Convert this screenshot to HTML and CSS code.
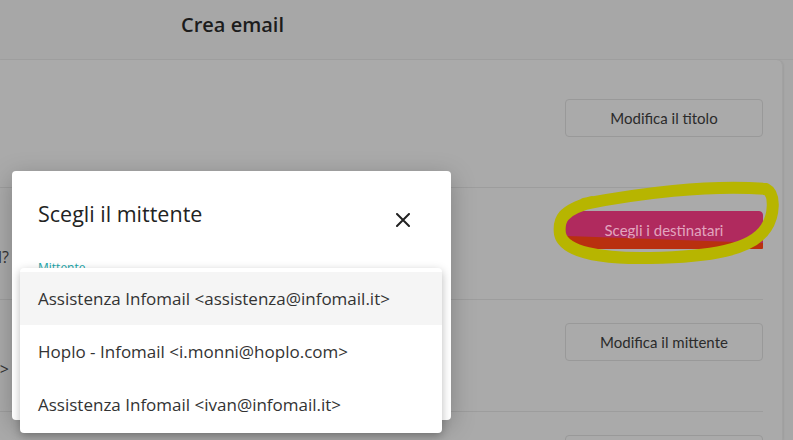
FILE: index.html
```html
<!DOCTYPE html>
<html lang="it">
<head>
    <meta charset="UTF-8">
    <meta name="viewport" content="width=device-width, initial-scale=1.0">
    <title>Crea email</title>
    <link rel="stylesheet" href="styles.css">
</head>
<body>
    <!-- Intestazione -->
    <header class="topbar">
        <h1 class="page-title">Crea email</h1>
    </header>

    <!-- Riepilogo campagna -->
    <main class="card">
        <section class="row">
            <div class="row-info"></div>
            <button class="btn">Modifica il titolo</button>
        </section>
        <section class="row">
            <div class="row-info">
                <p class="row-text">A chi vuoi inviare la tua email?</p>
            </div>
            <button class="btn btn-primary">Scegli i destinatari</button>
        </section>
        <section class="row">
            <div class="row-info">
                <p class="row-text">Assistenza Infomail &lt;assistenza@infomail.it&gt;</p>
            </div>
            <button class="btn">Modifica il mittente</button>
        </section>
        <section class="row">
            <div class="row-info"></div>
            <button class="btn">Modifica l'oggetto</button>
        </section>
    </main>

    <!-- Evidenziatore -->
    <svg class="marker" width="250" height="110" viewBox="0 0 250 110">
        <path d="M27 66 L223 73 L223 78 Q223 79 222 79 L28 79 Q27 79 27 78 Z" fill="#b9300f"/>
        <path d="M44 34 C 95 24, 170 14, 226 19 C 236 24, 234 46, 226 58 C 212 80, 170 87, 110 88 C 60 89, 24 82, 20 64 C 18 50, 22 40, 52 32"
              fill="none" stroke="#b7b500" stroke-width="12" stroke-linecap="round" stroke-linejoin="round"/>
    </svg>

    <!-- Finestra modale -->
    <div class="modal">
        <div class="modal-head">
            <h3>Scegli il mittente</h3>
            <button class="modal-close" aria-label="Chiudi">
                <svg width="14" height="14" viewBox="0 0 14 14">
                    <path d="M1 1 L13 13 M13 1 L1 13" stroke="#222" stroke-width="2" stroke-linecap="round"/>
                </svg>
            </button>
        </div>
        <label class="field-label">Mittente</label>

        <ul class="dropdown">
            <li class="selected">Assistenza Infomail &lt;assistenza@infomail.it&gt;</li>
            <li>Hoplo - Infomail &lt;i.monni@hoplo.com&gt;</li>
            <li>Assistenza Infomail &lt;ivan@infomail.it&gt;</li>
        </ul>
    </div>
</body>
</html>
```

FILE: styles.css
```css
/* ========== Variabili ========== */
:root {
    --page-bg: #a7a7a7;
    --card-bg: #aaaaaa;
    --line: #9d9d9d;
    --text: #1f1f1f;
    --pink: #b02a5e;
    --teal: #1ba5a8;
    --font: 'Open Sans', 'Noto Sans', sans-serif;
}

* {
    margin: 0;
    padding: 0;
    box-sizing: border-box;
}

html {
    overflow: hidden;
}

body {
    background: var(--page-bg);
    font-family: var(--font);
    color: var(--text);
    width: 793px;
    height: 440px;
    overflow: hidden;
}

/* ========== Intestazione ========== */
.topbar {
    height: 60px;
    border-bottom: 1px solid #a0a0a0;
    padding-left: 181px;
    display: flex;
    align-items: center;
}

.page-title {
    font-size: 20px;
    font-weight: 600;
    color: #1c1c1c;
    margin-top: -10px;
}

/* ========== Card ========== */
.card {
    width: 783px;
    height: 380px;
    overflow: hidden;
    background: var(--card-bg);
    border-right: 1px solid #a2a2a2;
    border-top-right-radius: 6px;
    padding: 16px 19px 0 0;
    box-shadow: 1px 0 2px rgba(0,0,0,0.06);
}

.row {
    height: 112px;
    border-bottom: 1px solid var(--line);
    display: flex;
    justify-content: space-between;
    align-items: flex-start;
    padding-top: 23px;
}

.row-info {
    width: 9px;
    display: flex;
    justify-content: flex-end;
    padding-top: 34px;
}

.row-text {
    flex: none;
    white-space: nowrap;
    font-size: 16px;
    line-height: 24px;
    color: #333;
}

.btn {
    width: 198px;
    height: 38px;
    border: 1px solid #999;
    border-radius: 4px;
    background: var(--card-bg);
    font: 15px 'Lato', sans-serif;
    color: #2b2b2b;
}

.btn-primary {
    background: var(--pink);
    border-color: var(--pink);
    color: #e2a5bf;
}

/* ========== Evidenziatore ========== */
.marker {
    position: absolute;
    left: 540px;
    top: 170px;
    pointer-events: none;
}

/* ========== Modale ========== */
.modal {
    position: absolute;
    left: 12px;
    top: 171px;
    width: 439px;
    height: 249px;
    background: #fff;
    border-radius: 4px;
    padding: 28px 26px 0;
    box-shadow: 0 6px 24px rgba(0,0,0,0.25);
}

.modal-head {
    display: flex;
    justify-content: space-between;
    align-items: flex-start;
}

.modal-head h3 {
    font-size: 21.5px;
    font-weight: 400;
    line-height: 30px;
    color: #222;
}

.modal-close {
    border: none;
    background: none;
    margin: 14px 15px 0 0;
    line-height: 0;
}

.field-label {
    display: block;
    margin-top: 31px;
    font-size: 12px;
    line-height: 16px;
    color: var(--teal);
}

.dropdown {
    position: absolute;
    left: 8px;
    top: 97px;
    width: 422px;
    list-style: none;
    background: #fff;
    border-radius: 4px;
    padding: 4px 0 2px;
    box-shadow: 0 3px 10px rgba(0,0,0,0.28);
}

.dropdown li {
    height: 53px;
    padding-left: 18px;
    display: flex;
    align-items: center;
    font-size: 17px;
    color: #333;
}

.dropdown li.selected {
    background: #f5f5f5;
}
```
